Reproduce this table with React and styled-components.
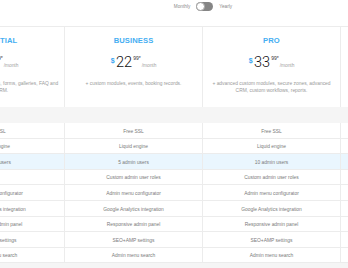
import React, { useState } from "react";
import styled, { createGlobalStyle } from "styled-components";

const GlobalStyle = createGlobalStyle`
  html, body {
    margin: 0;
    padding: 0;
    background: #ffffff;
  }
  body {
    font-family: "Liberation Sans", Arial, sans-serif;
    color: #777;
    overflow: hidden;
  }
`;

const COL = 138;

const plans = [
  {
    name: "ESSENTIAL",
    price: "11",
    desc: ["+ simple modules, blog, menus, forms, galleries, FAQ and", "basic CRM."],
    features: [
      "Free SSL",
      "Liquid engine",
      "2 admin users",
      "",
      "Admin menu configurator",
      "Google Analytics integration",
      "Responsive admin panel",
      "SEO+AMP settings",
      "Admin menu search",
    ],
  },
  {
    name: "BUSINESS",
    price: "22",
    desc: ["+ custom modules, events, booking records."],
    features: [
      "Free SSL",
      "Liquid engine",
      "5 admin users",
      "Custom admin user roles",
      "Admin menu configurator",
      "Google Analytics integration",
      "Responsive admin panel",
      "SEO+AMP settings",
      "Admin menu search",
    ],
  },
  {
    name: "PRO",
    price: "33",
    desc: ["+ advanced custom modules, secure zones, advanced", "CRM, custom workflows, reports."],
    features: [
      "Free SSL",
      "Liquid engine",
      "10 admin users",
      "Custom admin user roles",
      "Admin menu configurator",
      "Google Analytics integration",
      "Responsive admin panel",
      "SEO+AMP settings",
      "Admin menu search",
    ],
  },
  {
    name: "ENTERPRISE",
    price: "49",
    desc: ["+ everything in Pro, priority support."],
    features: [
      "Free SSL",
      "Liquid engine",
      "Unlimited users",
      "Custom admin user roles",
      "Admin menu configurator",
      "Google Analytics integration",
      "Responsive admin panel",
      "SEO+AMP settings",
      "Admin menu search",
    ],
  },
];

const HIGHLIGHT_ROW = 2;

export default function App() {
  const [yearly, setYearly] = useState(false);
  const rows = plans[0].features.map((_, i) => plans.map((p) => p.features[i]));

  return (
    <Viewport>
      <GlobalStyle />
      <Page>
        <Billing>
          <BillingLabel>Monthly</BillingLabel>
          <Switch $on={yearly} onClick={() => setYearly(!yearly)}>
            <Knob $on={yearly} />
          </Switch>
          <BillingLabel>Yearly</BillingLabel>
        </Billing>

        <HeaderRow>
          {plans.map((p) => (
            <PlanHead key={p.name}>
              <PlanName>{p.name}</PlanName>
              <Price>
                <Currency>$</Currency>
                <Amount>{p.price}</Amount>
                <Cents>99</Cents>
                <Star>*</Star>
                <Per>/month</Per>
              </Price>
              <Desc>
                {p.desc.map((line) => (
                  <DescLine key={line}>{line}</DescLine>
                ))}
              </Desc>
            </PlanHead>
          ))}
        </HeaderRow>

        <Band />

        {rows.map((cells, i) => (
          <FeatureRow key={i} $highlight={i === HIGHLIGHT_ROW}>
            {cells.map((c, j) => (
              <FeatureCell key={j}>{c}</FeatureCell>
            ))}
          </FeatureRow>
        ))}

        <Band />
      </Page>
    </Viewport>
  );
}

const Viewport = styled.div`
  width: 348px;
  height: 268px;
  overflow: hidden;
`;

const Page = styled.div`
  width: ${COL * 4}px;
  margin-left: -73px;
`;

const Billing = styled.div`
  height: 26px;
  display: flex;
  align-items: flex-start;
  justify-content: center;
  gap: 6px;
  padding-top: 2px;
  box-sizing: border-box;
`;

const BillingLabel = styled.span`
  font-size: 4.7px;
  line-height: 9px;
  color: #8a8a8a;
`;

const Switch = styled.button`
  width: 17px;
  height: 9px;
  padding: 0;
  border: 0;
  border-radius: 5px;
  background: ${(p) => (p.$on ? "#3fa9f5" : "#858585")};
  position: relative;
  cursor: pointer;
`;

const Knob = styled.span`
  position: absolute;
  top: 0;
  left: ${(p) => (p.$on ? "8px" : "0")};
  width: 9px;
  height: 9px;
  box-sizing: border-box;
  border-radius: 50%;
  background: #fff;
  border: 1px solid #a5a5a5;
`;

const HeaderRow = styled.div`
  display: grid;
  grid-template-columns: repeat(4, ${COL}px);
  height: 81px;
  border-top: 1px solid #ececec;
  box-sizing: border-box;
`;

const PlanHead = styled.div`
  border-right: 1px solid #ececec;
  display: flex;
  flex-direction: column;
  align-items: center;
  padding-top: 9px;
  overflow: hidden;
`;

const PlanName = styled.div`
  font-size: 7.6px;
  line-height: 9px;
  font-weight: 700;
  color: #45aef2;
  letter-spacing: 0.1px;
`;

const Price = styled.div`
  display: flex;
  align-items: flex-start;
  margin-top: 10px;
  height: 15px;
`;

const Currency = styled.span`
  font-size: 7px;
  line-height: 8px;
  font-weight: 700;
  color: #3aa6f2;
  margin-right: 1.5px;
  margin-top: 2px;
`;

const Amount = styled.span`
  font-family: Roboto, "Liberation Sans", sans-serif;
  font-weight: 300;
  font-size: 14.5px;
  line-height: 15px;
  color: #111;
`;

const Cents = styled.span`
  font-size: 5px;
  line-height: 6px;
  color: #333;
  margin-left: 1px;
`;

const Star = styled.span`
  font-size: 5px;
  line-height: 6px;
  color: #333;
`;

const Per = styled.span`
  align-self: flex-end;
  font-size: 4.8px;
  line-height: 6px;
  color: #a0a0a0;
  margin-left: 1px;
  margin-bottom: 1px;
`;

const Desc = styled.div`
  margin-top: 10px;
  display: flex;
  flex-direction: column;
  align-items: center;
`;

const DescLine = styled.div`
  font-size: 4.9px;
  line-height: 7px;
  color: #9a9a9a;
  white-space: nowrap;
`;

const Band = styled.div`
  height: 16px;
  background: #f5f5f5;
`;

const FeatureRow = styled.div`
  display: grid;
  grid-template-columns: repeat(4, ${COL}px);
  height: 15.6px;
  background: ${(p) => (p.$highlight ? "#eaf6fe" : "#fff")};
  border-bottom: 1px solid #ececec;
  box-sizing: border-box;
`;

const FeatureCell = styled.div`
  border-right: 1px solid #ececec;
  display: flex;
  align-items: center;
  justify-content: center;
  padding-top: 1.5px;
  font-size: 4.9px;
  color: #7a7a7a;
  white-space: nowrap;
  overflow: hidden;
`;
